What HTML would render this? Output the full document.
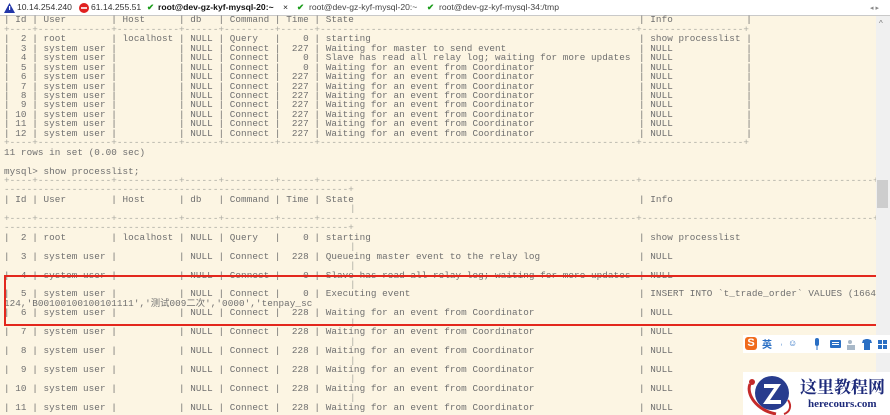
<!DOCTYPE html>
<html><head><meta charset="utf-8"><style>
*{margin:0;padding:0;box-sizing:border-box}
body{width:890px;height:415px;overflow:hidden;background:#fcf5e3;position:relative;font-family:"Liberation Mono",monospace}
#tabs{position:absolute;left:0;top:0;width:890px;height:16px;background:#fff;border-bottom:1px solid #c9c9c9;font-family:"Liberation Sans",sans-serif;font-size:8.6px;color:#333;white-space:nowrap}
#tabs span{position:absolute;top:2px}
.t{position:absolute;left:4px;font-size:9.3px;letter-spacing:0.065px;line-height:9.45px;height:9.45px;white-space:pre;color:#6f6f6f}
.t b{font-weight:normal;position:absolute;top:0;white-space:pre;left:635px}
.t b.c{left:346px}
.s{color:#a8a8a0}
#sb{position:absolute;left:876px;top:16px;width:14px;height:399px;background:#f0f0f0}
#thumb{position:absolute;left:877px;top:180px;width:11px;height:28px;background:#cdcdcd}
#red{position:absolute;left:4px;top:275px;width:877px;height:51px;border:2px solid #e3271d}
</style></head><body>
<div id="tabs">
<svg style="position:absolute;left:4px;top:3px" width="11" height="10"><polygon points="5.5,0 11,10 0,10" fill="#2236a8"/><rect x="5" y="3" width="1.2" height="4" fill="#fff"/></svg>
<span style="left:17px">10.14.254.240</span>
<svg style="position:absolute;left:79px;top:3px" width="10" height="10"><circle cx="5" cy="5" r="5" fill="#e02020"/><rect x="2" y="4.2" width="6" height="1.6" fill="#fff"/></svg>
<span style="left:91px">61.14.255.51</span>
<span style="left:147px;color:#1c9c1c;font-weight:bold">✔</span>
<span style="left:158px;font-weight:bold;color:#111">root@dev-gz-kyf-mysql-20:~</span>
<span style="left:283px;color:#222">×</span>
<span style="left:297px;color:#1c9c1c;font-weight:bold">✔</span>
<span style="left:309px;color:#444">root@dev-gz-kyf-mysql-20:~</span>
<span style="left:427px;color:#1c9c1c;font-weight:bold">✔</span>
<span style="left:439px;color:#444">root@dev-gz-kyf-mysql-34:/tmp</span>
<span style="left:870px;color:#888;font-size:7px;top:4px">◂ ▸</span>
</div>

<div class="t" style="top:15.3px">| Id | User        | Host      | db   | Command | Time | State<b>| Info             |</b></div>
<div class="t s" style="top:24.8px">+----+-------------+-----------+------+---------+------+--------------------------------------------------------+------------------+</div>
<div class="t" style="top:34.2px">|  2 | root        | localhost | NULL | Query   |    0 | starting<b>| show processlist |</b></div>
<div class="t" style="top:43.7px">|  3 | system user |           | NULL | Connect |  227 | Waiting for master to send event<b>| NULL             |</b></div>
<div class="t" style="top:53.1px">|  4 | system user |           | NULL | Connect |    0 | Slave has read all relay log; waiting for more updates<b>| NULL             |</b></div>
<div class="t" style="top:62.6px">|  5 | system user |           | NULL | Connect |    0 | Waiting for an event from Coordinator<b>| NULL             |</b></div>
<div class="t" style="top:72.0px">|  6 | system user |           | NULL | Connect |  227 | Waiting for an event from Coordinator<b>| NULL             |</b></div>
<div class="t" style="top:81.5px">|  7 | system user |           | NULL | Connect |  227 | Waiting for an event from Coordinator<b>| NULL             |</b></div>
<div class="t" style="top:90.9px">|  8 | system user |           | NULL | Connect |  227 | Waiting for an event from Coordinator<b>| NULL             |</b></div>
<div class="t" style="top:100.4px">|  9 | system user |           | NULL | Connect |  227 | Waiting for an event from Coordinator<b>| NULL             |</b></div>
<div class="t" style="top:109.8px">| 10 | system user |           | NULL | Connect |  227 | Waiting for an event from Coordinator<b>| NULL             |</b></div>
<div class="t" style="top:119.3px">| 11 | system user |           | NULL | Connect |  227 | Waiting for an event from Coordinator<b>| NULL             |</b></div>
<div class="t" style="top:128.7px">| 12 | system user |           | NULL | Connect |  227 | Waiting for an event from Coordinator<b>| NULL             |</b></div>
<div class="t s" style="top:138.2px">+----+-------------+-----------+------+---------+------+--------------------------------------------------------+------------------+</div>
<div class="t" style="top:147.6px">11 rows in set (0.00 sec)</div>
<div class="t" style="top:166.5px">mysql&gt; show processlist;</div>
<div class="t s" style="top:176.0px">+----+-------------+-----------+------+---------+------+--------------------------------------------------------+-----------------------------------------+</div>
<div class="t s" style="top:185.4px">-------------------------------------------------------------+</div>
<div class="t" style="top:194.9px">| Id | User        | Host      | db   | Command | Time | State<b>| Info</b></div>
<div class="t s" style="top:204.3px"><b class="c">|</b></div>
<div class="t s" style="top:213.8px">+----+-------------+-----------+------+---------+------+--------------------------------------------------------+-----------------------------------------+</div>
<div class="t s" style="top:223.2px">-------------------------------------------------------------+</div>
<div class="t" style="top:232.7px">|  2 | root        | localhost | NULL | Query   |    0 | starting<b>| show processlist</b></div>
<div class="t s" style="top:242.1px"><b class="c">|</b></div>
<div class="t" style="top:251.6px">|  3 | system user |           | NULL | Connect |  228 | Queueing master event to the relay log<b>| NULL</b></div>
<div class="t s" style="top:261.0px"><b class="c">|</b></div>
<div class="t" style="top:270.5px">|  4 | system user |           | NULL | Connect |    0 | Slave has read all relay log; waiting for more updates<b>| NULL</b></div>
<div class="t s" style="top:279.9px"><b class="c">|</b></div>
<div class="t" style="top:289.4px">|  5 | system user |           | NULL | Connect |    0 | Executing event<b>| INSERT INTO `t_trade_order` VALUES (1664</b></div>
<div class="t" style="top:298.8px;font-family:'Liberation Mono','Noto Sans CJK SC',monospace">124,'B00100100100101111','测试009二次','0000','tenpay_sc</div>
<div class="t" style="top:308.3px">|  6 | system user |           | NULL | Connect |  228 | Waiting for an event from Coordinator<b>| NULL</b></div>
<div class="t s" style="top:317.7px"><b class="c">|</b></div>
<div class="t" style="top:327.2px">|  7 | system user |           | NULL | Connect |  228 | Waiting for an event from Coordinator<b>| NULL</b></div>
<div class="t s" style="top:336.6px"><b class="c">|</b></div>
<div class="t" style="top:346.1px">|  8 | system user |           | NULL | Connect |  228 | Waiting for an event from Coordinator<b>| NULL</b></div>
<div class="t s" style="top:355.5px"><b class="c">|</b></div>
<div class="t" style="top:365.0px">|  9 | system user |           | NULL | Connect |  228 | Waiting for an event from Coordinator<b>| NULL</b></div>
<div class="t s" style="top:374.4px"><b class="c">|</b></div>
<div class="t" style="top:383.9px">| 10 | system user |           | NULL | Connect |  228 | Waiting for an event from Coordinator<b>| NULL</b></div>
<div class="t s" style="top:393.3px"><b class="c">|</b></div>
<div class="t" style="top:402.8px">| 11 | system user |           | NULL | Connect |  228 | Waiting for an event from Coordinator<b>| NULL</b></div>

<div id="red"></div>
<div id="sb"><div style="position:absolute;left:3px;top:3px;font-size:8px;color:#777;font-family:'Liberation Sans',sans-serif">^</div></div>
<div id="thumb"></div>

<div style="position:absolute;left:743px;top:335px;width:147px;height:18px;background:#fff"></div>
<div style="position:absolute;left:745px;top:337px;width:12px;height:13px;background:#f06a1c;border-radius:3px;color:#fff;font:bold 11px 'Liberation Sans',sans-serif;text-align:center;line-height:13px">S</div>
<div style="position:absolute;left:762px;top:337px;font:bold 10px 'Noto Sans CJK SC',sans-serif;color:#2a6fc4;line-height:13px">英</div>
<div style="position:absolute;left:780px;top:337px;font:9px 'Liberation Sans',sans-serif;color:#2a6fc4;letter-spacing:5px;line-height:13px">˒☺</div>
<svg style="position:absolute;left:812px;top:337px" width="78" height="14"><rect x="3" y="1" width="4" height="8" rx="2" fill="#2a6fc4"/><rect x="4.5" y="9" width="1" height="4" fill="#2a6fc4"/><rect x="18" y="3" width="11" height="8" rx="1" fill="#2a6fc4"/><rect x="20" y="5" width="7" height="1" fill="#fff"/><rect x="20" y="7" width="7" height="1" fill="#fff"/><circle cx="38" cy="5" r="2" fill="#a8b8c8"/><rect x="35" y="8" width="8" height="5" fill="#a8b8c8"/><path d="M51 3l3-1h2l3 1 1 3-2 0v7h-6v-7h-2z" fill="#2a6fc4"/><rect x="66" y="3" width="4" height="4" fill="#2a6fc4"/><rect x="71" y="3" width="4" height="4" fill="#2a6fc4"/><rect x="66" y="8" width="4" height="4" fill="#2a6fc4"/><rect x="71" y="8" width="4" height="4" fill="#2a6fc4"/></svg>

<div style="position:absolute;left:743px;top:372px;width:147px;height:43px;background:#fff"></div>
<svg style="position:absolute;left:744px;top:372px" width="60" height="43"><path d="M6 12 C2 22 12 38 32 42" stroke="#c42a2a" stroke-width="3" fill="none"/><circle cx="8" cy="10" r="3" fill="#c42a2a"/><circle cx="28" cy="21" r="17" fill="#283c8e"/><path d="M20 12h17l-11 16h11v4h-18l11-16h-10z" fill="#fff"/><path d="M44 28 C48 34 46 40 40 42" stroke="#c42a2a" stroke-width="2" fill="none"/></svg>
<div style="position:absolute;left:800px;top:376px;font:bold 17px 'Noto Serif CJK SC',serif;color:#1d2a7a;white-space:nowrap;line-height:20px">这里教程网</div>
<div style="position:absolute;left:808px;top:398px;font:bold 11px 'Liberation Serif',serif;color:#1d2a7a;white-space:nowrap;line-height:13px">herecours.com</div>
</body></html>
